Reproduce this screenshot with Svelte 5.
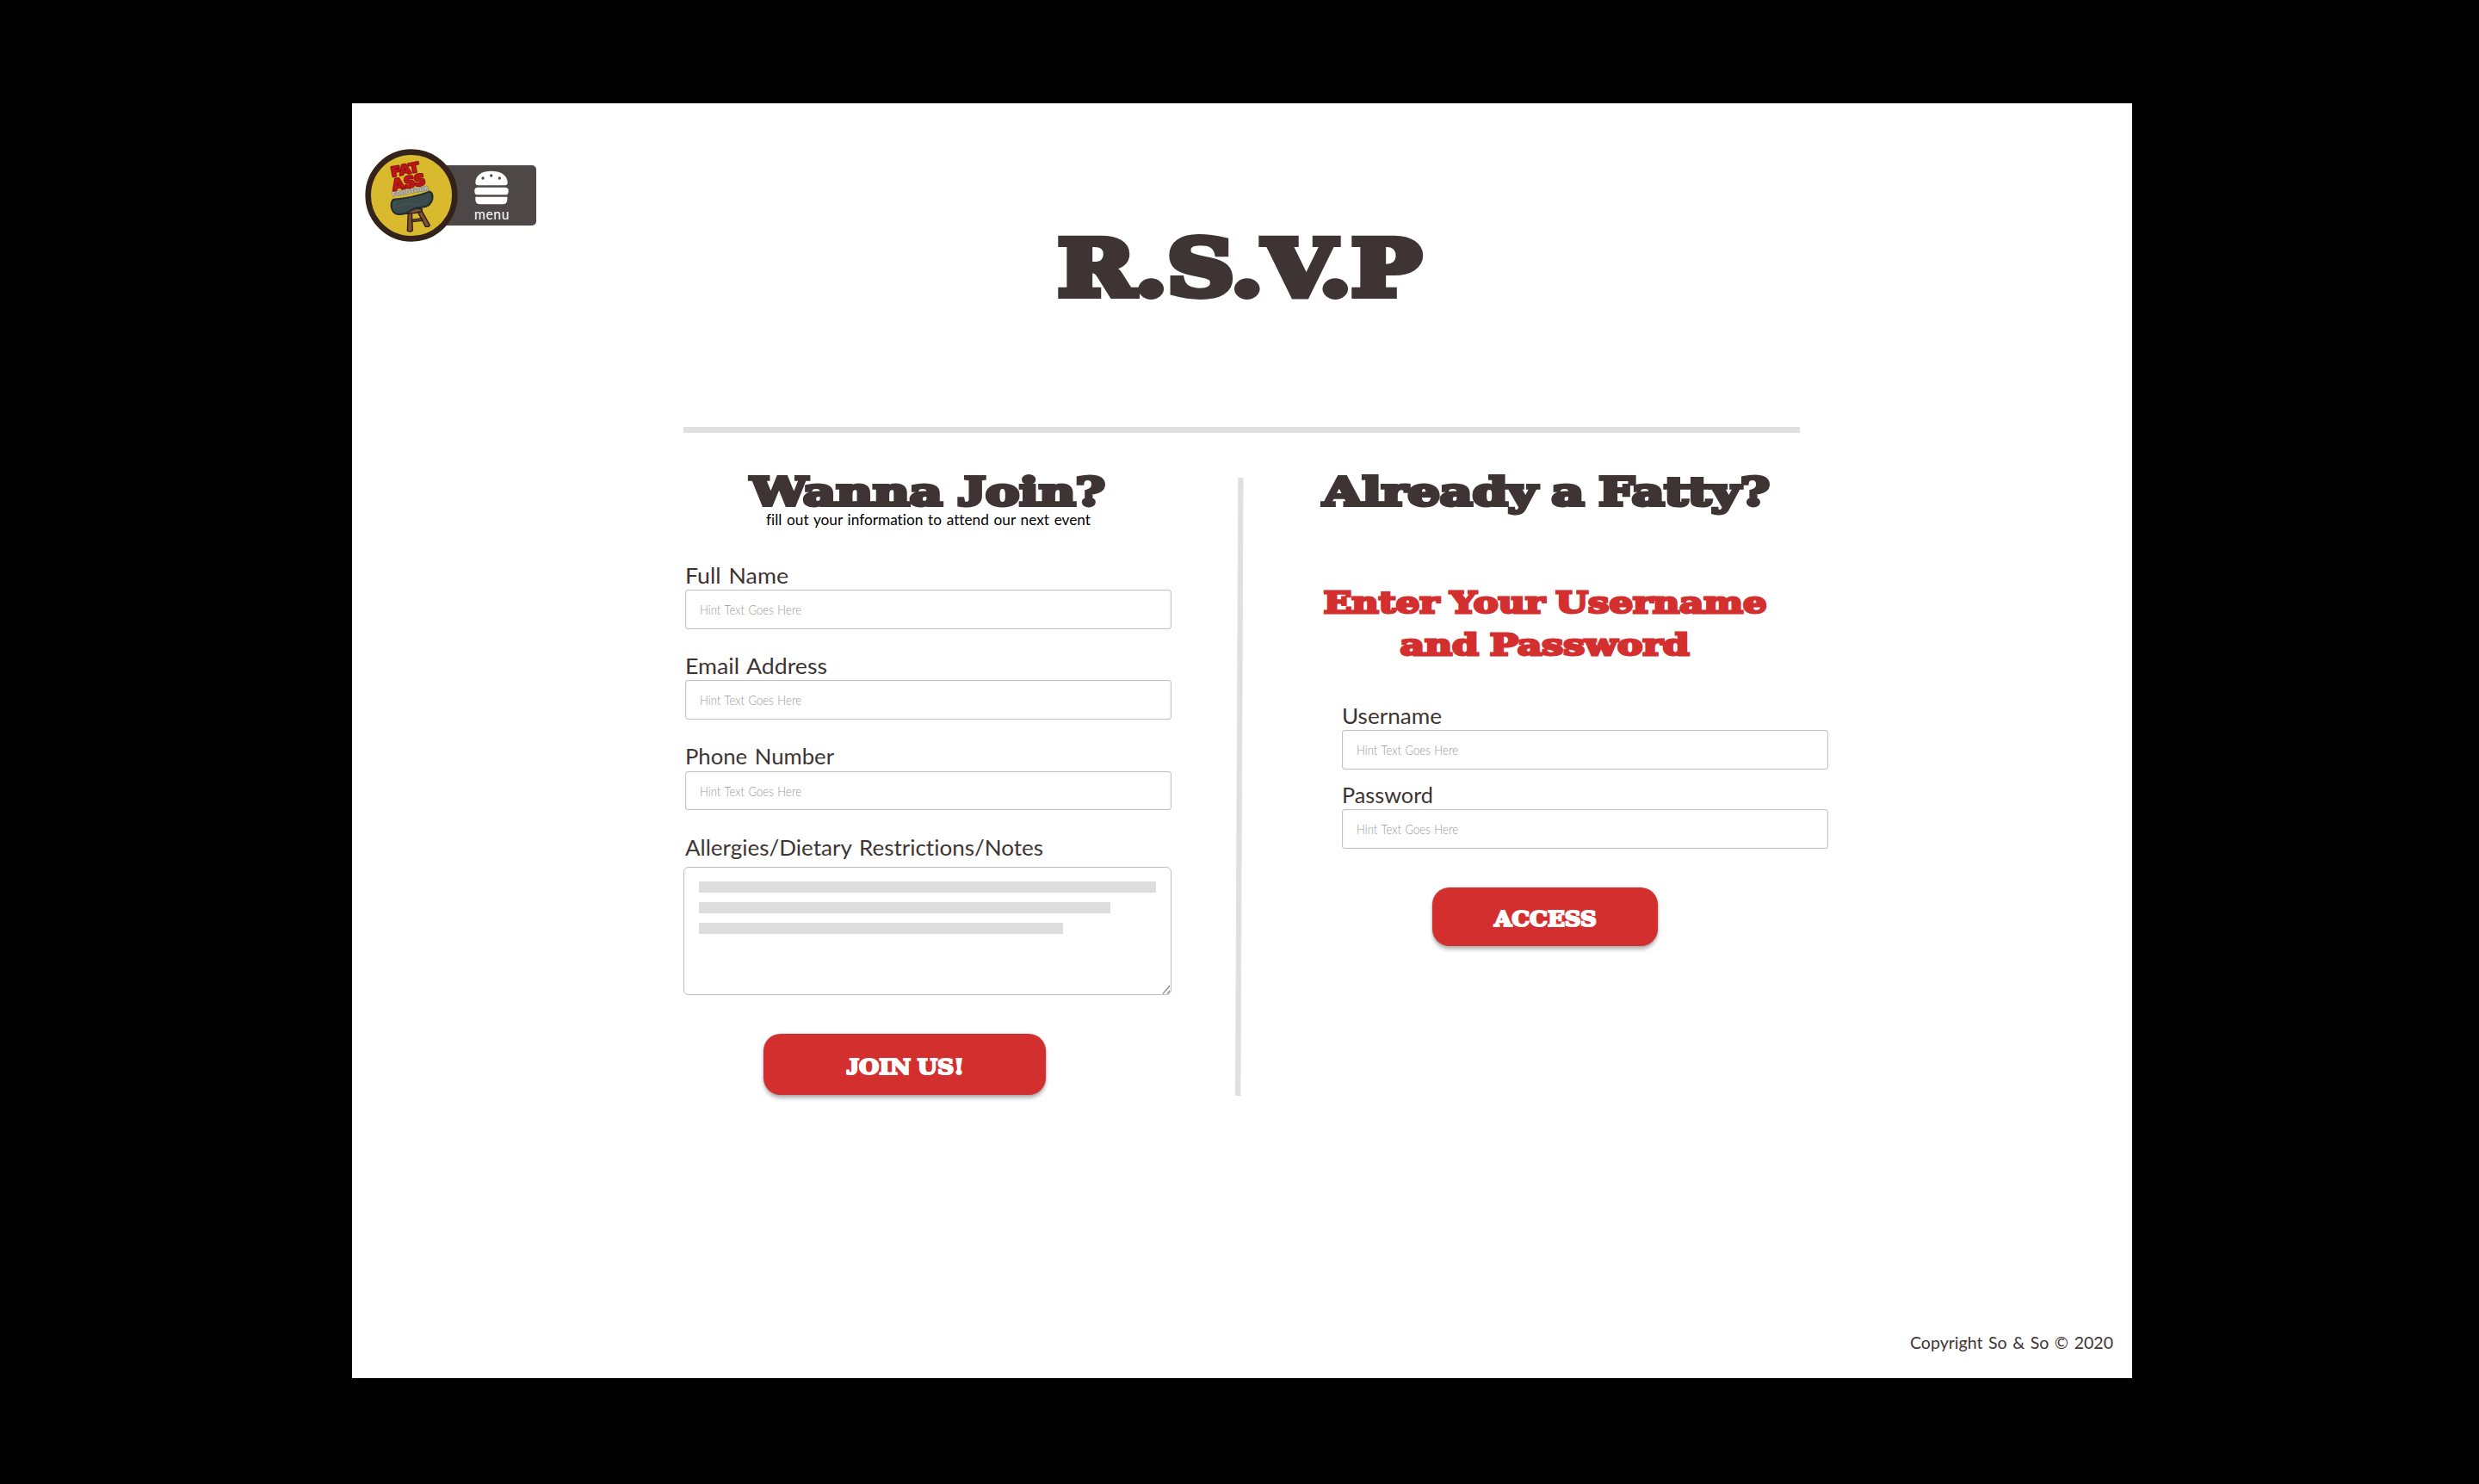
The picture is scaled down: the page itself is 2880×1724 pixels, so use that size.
<script>
  const notes = [531, 478, 422.5];
  const joinFields = [
    { label: 'Full Name', width: 120 },
    { label: 'Email Address', width: 165 },
    { label: 'Phone Number', width: 173 }
  ];
  const loginFields = [
    { label: 'Username', width: 116 },
    { label: 'Password', width: 106 }
  ];
</script>

<!-- One line of text set to a fixed measure; the box spans cap height to baseline -->
{#snippet line(text, width, cap, kind)}
  <svg class="line {kind}" {width} height={cap}>
    <text x="0" y={cap} textLength={width} lengthAdjust="spacingAndGlyphs">{text}</text>
  </svg>
{/snippet}

<!-- Heavy slab lettering: the outline thickens the glyphs, so the text is inset by half of it -->
{#snippet slab(text, width, cap, weight, kind)}
  <svg class="line slab {kind}" {width} height={cap} stroke-width={weight}>
    <text x={weight / 2} y={cap - weight / 2} textLength={width - weight} lengthAdjust="spacingAndGlyphs">{#each text.split(/(J)/) as part}{#if part === 'J'}<tspan class="jay">J</tspan>{:else}{part}{/if}{/each}</text>
  </svg>
{/snippet}

{#snippet field(f)}
  <div class="field">
    <div class="label">{@render line(f.label, f.width, 18.5, 'label-text')}</div>
    <div class="input">{@render line('Hint Text Goes Here', 118, 11, 'hint')}</div>
  </div>
{/snippet}

<main>
  <nav>
    <svg class="logo" width="108" height="108" viewBox="72 188 324 324">
      <circle cx="234" cy="350" r="151" fill="#d9ba2e" stroke="#33231a" stroke-width="20" />
      <g stroke="#2b1a14" stroke-width="4" stroke-linejoin="round" fill="#7c5138">
        <path d="M223 405L235 405L238 472L232 476L220 474Z" />
        <path d="M254 404L269 402L298 454L294 459L283 459Z" />
        <path d="M235 435L270 430L272 438L236 442Z" />
        <path d="M213 406Q240 390 271 398L270 406Q240 416 213 414Z" />
      </g>
      <path d="M172 364Q238 359 298 337Q310 342 307 362Q302 388 272 391Q250 393 235 400Q213 418 187 416Q168 413 164 390Q162 371 172 364Z" fill="#3b4a4b" stroke="#1f2b2d" stroke-width="6" stroke-linejoin="round" />
      <path d="M180 370Q172 375 175 388Q185 395 204 382Q226 376 246 383Q278 382 292 358" fill="none" stroke="#4b5c5d" stroke-width="5" opacity=".5" />
      <g class="patch">
        <text class="tour" x="168" y="354" font-size="20" transform="rotate(-10 168 354)" textLength="128" lengthAdjust="spacingAndGlyphs">FOODTOUR</text>
        <g class="red" transform="rotate(-11 212 260)">
          <text x="162" y="276" font-size="46" textLength="99" lengthAdjust="spacingAndGlyphs">FAT</text>
          <text x="157" y="324" font-size="53" textLength="117" lengthAdjust="spacingAndGlyphs">ASS</text>
        </g>
      </g>
    </svg>
    <div class="menu">
      <svg class="burger" width="40" height="40" viewBox="453 265 120 120">
        <path fill="#fff" d="M457 308C457 280 482 267 512 267S569 280 569 308Q569 317 560 317H466Q457 317 457 308Z" />
        <rect x="454" y="324" width="118" height="26" rx="11" fill="#fff" />
        <path fill="#fff" d="M457 357H568V366Q568 383 551 383H474Q457 383 457 366Z" />
        <g fill="#4d4847"><circle cx="483" cy="292" r="5" /><circle cx="512" cy="283" r="5" /><circle cx="541" cy="292" r="5" /></g>
      </svg>
      {@render line('menu', 41, 10, 'menu-text')}
    </div>
  </nav>

  <h1>{@render slab('R.S.V.P', 430, 74, 8, 'title')}</h1>
  <hr />

  <div class="columns">
    <section class="join">
      <h2>{@render slab('Wanna Join?', 416, 37, 4, 'heading')}</h2>
      <p>{@render line('fill out your information to attend our next event', 377, 13, 'sub')}</p>
      <div class="fields">
        {#each joinFields as f}{@render field(f)}{/each}
      </div>
      <div class="notes-label">{@render line('Allergies/Dietary Restrictions/Notes', 416, 18.5, 'label-text')}</div>
      <div class="textarea">
        {#each notes as w}<div class="bar" style="width: {w}px"></div>{/each}
        <svg class="grip" width="10" height="11" viewBox="0 0 10 11">
          <path d="M1 10.5L9 1M6 10.5L9 7" stroke="#8a8a8a" stroke-width="1.2" />
        </svg>
      </div>
      <button class="join-btn">{@render slab('JOIN US!', 139, 19, 2, 'action')}</button>
    </section>

    <svg class="divider" width="10" height="718" viewBox="0 0 10 718">
      <path d="M3.3 0H9.5L6.4 718H0Z" fill="#e0e0e0" />
    </svg>

    <section class="login">
      <h2>{@render slab('Already a Fatty?', 523, 37, 4, 'heading')}</h2>
      <h3>
        {@render slab('Enter Your Username', 518, 27.5, 2.8, 'prompt')}
        {@render slab('and Password', 339, 27.5, 2.8, 'prompt')}
      </h3>
      <div class="login-fields">
        {#each loginFields as f}{@render field(f)}{/each}
      </div>
      <button class="access-btn">{@render slab('ACCESS', 121, 18.5, 2, 'action')}</button>
    </section>
  </div>

  <footer>{@render line('Copyright So & So © 2020', 236, 14.5, 'copy')}</footer>
</main>

<style>
  :global(body) { background: #000; }
  main {
    box-sizing: border-box;
    width: 2068px;
    height: 1481px;
    margin: 120px 0 0 409px;
    padding-top: 53px;
    background: #fff;
    display: flex;
    flex-direction: column;
    font-family: Lato, "Open Sans", sans-serif;
    font-variant-ligatures: none;
  }
  svg { display: block; flex: none; }
  h1, h2, h3, p { margin: 0; }
  .line { overflow: visible; word-spacing: .08em; }
  .slab {
    font-family: "DejaVu Serif", serif;
    font-weight: 700;
    fill: #3e3433;
    stroke: #3e3433;
    word-spacing: -.06em;
  }
  /* This J stands on the baseline */
  .jay { font-family: "Liberation Serif", serif; font-size: 1.12em; }
  .title { font-size: 90.5px; }
  .heading { font-size: 45px; }
  .prompt { font-size: 34px; fill: #d32f2f; stroke: #d32f2f; }
  .action { font-size: 23.5px; fill: #fff; stroke: #fff; }
  .label-text { font-size: 25.5px; fill: #3e3433; }
  .hint { font-size: 15px; font-weight: 300; fill: #999; }
  .sub { font-size: 17px; fill: #000; }
  .copy { font-size: 20px; fill: #3e3433; }
  .menu-text { font-size: 18px; fill: #fff; letter-spacing: .04em; }

  nav { display: flex; height: 108px; margin-left: 15px; }
  .logo { z-index: 1; }
  .patch { font-family: "DejaVu Sans", sans-serif; font-weight: 700; stroke-linejoin: round; paint-order: stroke; }
  .red { fill: #bd1719; stroke: #94100f; stroke-width: 7px; }
  .tour { fill: #c4c3be; stroke: #7d7b74; stroke-width: 4px; }
  .menu {
    box-sizing: border-box;
    width: 130px;
    height: 70px;
    margin: 19px 0 0 -39px;
    padding: 6px 0 0 58px;
    border-radius: 5px;
    background: #4d4847;
  }
  .burger { margin-bottom: 7px; }

  h1 { margin: -8px 0 0 816px; }
  hr { width: 1297px; height: 7px; margin: 149px 0 0 385px; border: 0; background: #e0e0e0; }
  .columns { display: flex; align-items: flex-start; padding-left: 385px; }
  .join { width: 567px; padding-top: 49px; }
  .join h2 { margin-left: 76px; }
  .join p { margin: 8px 0 0 96px; }
  .divider { margin: 52px 90px 0 74px; }
  .login { width: 590px; padding-top: 48.5px; }

  .fields { display: flex; flex-direction: column; gap: 33.3px; margin: 48.5px 0 0 2px; }
  .label { height: 26.5px; }
  .label svg { margin-left: -.5px; }
  .input {
    box-sizing: border-box;
    width: 565px;
    height: 45.5px;
    padding: 17px 0 0 16px;
    border: 1px solid #c2c2c2;
    border-radius: 3px;
    box-shadow: inset 0 0 1px #ccc;
  }
  .notes-label { margin: 33.6px 0 14px 2px; }
  .textarea {
    box-sizing: border-box;
    position: relative;
    width: 567px;
    height: 149px;
    padding: 16px 0 0 17px;
    border: 1px solid #bdbdbd;
    border-radius: 6px;
    display: flex;
    flex-direction: column;
    gap: 10.7px;
  }
  .bar { height: 13px; background: #ddd; }
  .grip { position: absolute; right: 0; bottom: 0; }

  button {
    display: flex;
    align-items: flex-start;
    justify-content: center;
    box-sizing: border-box;
    border: 0;
    border-radius: 20px;
    background: #d32f2f;
    box-shadow: 0 4px 4px rgba(0, 0, 0, .28), 0 0 2px rgba(0, 0, 0, .25);
  }
  .join-btn { width: 328px; height: 71px; margin: 45px 0 0 93px; padding: 29px 0 0; }
  .access-btn { width: 262px; height: 68px; margin: 45px 0 0 129px; padding: 27px 0 0; }

  h3 { display: flex; flex-direction: column; gap: 22px; align-items: center; width: 515px; margin: 97px 0 0 2px; }
  .login-fields { display: flex; flex-direction: column; gap: 20px; margin: 59px 0 0 24px; }

  footer { margin: auto 22px 35px auto; }
</style>
